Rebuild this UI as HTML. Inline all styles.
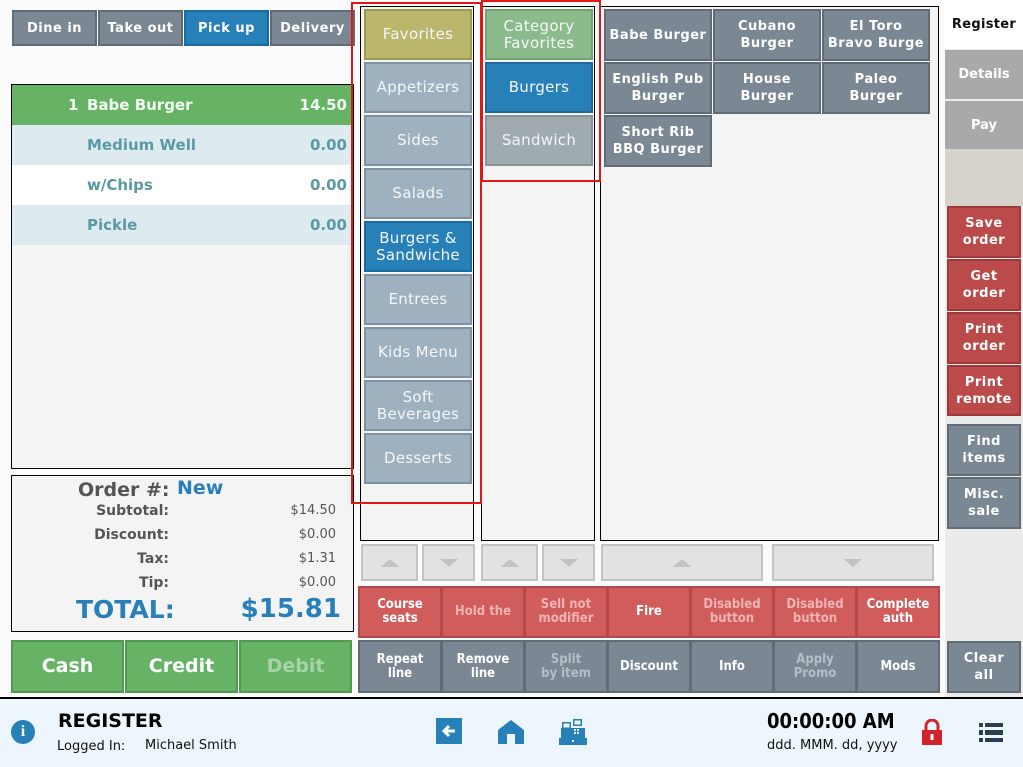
<!DOCTYPE html>
<html><head><meta charset="utf-8"><style>
*{box-sizing:border-box;margin:0;padding:0}
body{width:1023px;height:767px;background:#fbfbfb;position:relative;overflow:hidden;font-family:"DejaVu Sans","Liberation Sans",sans-serif}
.a{position:absolute}
.b{position:absolute;display:flex;align-items:center;justify-content:center;text-align:center;color:#fff;font-weight:bold;line-height:17px}
.g{background:#7b8893;border:2px solid #5f6b75}
.bl{background:#2880b9;border:2px solid #1d6a9c}
.cat{background:#9fb1bf;border:2px solid #7f929f;font-weight:normal;font-size:15px;color:#f4f7f9;letter-spacing:.3px}
.it{font-size:13px;letter-spacing:.5px}
.rd{background:#d05c5c;border:2px solid #b54848;font-family:"DejaVu Sans Condensed","DejaVu Sans",sans-serif;font-size:13px;line-height:14px}
.gy{background:#7b8893;border:2px solid #5f6b75;font-family:"DejaVu Sans Condensed","DejaVu Sans",sans-serif;font-size:13px;line-height:14px}
.dis{color:#f0b4b4}
.dis2{color:#b4bec6}
.rt{font-size:13px;line-height:17px;letter-spacing:.5px}
.rr{background:#bb4a4a;border:2px solid #9c3a3a}
.arr{position:absolute;background:#e2e2e2;border:2px solid #c3c3c3;display:flex;align-items:center;justify-content:center}
.up{width:0;height:0;border-left:9px solid transparent;border-right:9px solid transparent;border-bottom:8px solid #c2c2c2}
.dn{width:0;height:0;border-left:9px solid transparent;border-right:9px solid transparent;border-top:8px solid #c2c2c2}
.row{position:absolute;left:1px;width:340px;height:40px;font-weight:bold;font-size:15px;color:#5a9aa0}
.row span{position:absolute;top:11px}
.lbl{position:absolute;right:184px;font-weight:bold;font-size:14px;color:#555}
.val{position:absolute;right:17px;font-size:13px;color:#555}
.tab{font-size:13px;letter-spacing:.5px}
</style></head><body>

<div class="b g tab" style="left:12px;top:10px;width:85px;height:36px">Dine in</div>
<div class="b g tab" style="left:98px;top:10px;width:85px;height:36px">Take out</div>
<div class="b bl tab" style="left:184px;top:10px;width:85px;height:36px">Pick up</div>
<div class="b g tab" style="left:270px;top:10px;width:85px;height:36px">Delivery</div>

<div class="a" style="left:11px;top:84px;width:343px;height:385px;border:1px solid #000;background:#f4f4f4">
 <div class="row" style="top:0;left:0;width:341px;background:#66b366;color:#f4fff4"><span style="left:56px">1</span><span style="left:75px">Babe Burger</span><span style="right:6px">14.50</span></div>
 <div class="row" style="top:40px;left:0;width:341px;background:#ddebf0"><span style="left:75px">Medium Well</span><span style="right:6px">0.00</span></div>
 <div class="row" style="top:80px;left:0;width:341px;background:#fff"><span style="left:75px">w/Chips</span><span style="right:6px">0.00</span></div>
 <div class="row" style="top:120px;left:0;width:341px;background:#ddebf0"><span style="left:75px">Pickle</span><span style="right:6px">0.00</span></div>
</div>

<div class="a" style="left:11px;top:475px;width:343px;height:157px;border:1px solid #000;background:#f4f4f4">
 <div class="a" style="left:66px;top:3px;font-weight:bold;font-size:19px;color:#555">Order #:</div>
 <div class="a" style="left:165px;top:1px;font-weight:bold;font-size:19px;color:#2880b9">New</div>
 <div class="lbl" style="top:27px">Subtotal:</div><div class="val" style="top:27px">$14.50</div>
 <div class="lbl" style="top:51px">Discount:</div><div class="val" style="top:51px">$0.00</div>
 <div class="lbl" style="top:75px">Tax:</div><div class="val" style="top:75px">$1.31</div>
 <div class="lbl" style="top:99px">Tip:</div><div class="val" style="top:99px">$0.00</div>
 <div class="a" style="left:64px;top:119px;font-weight:bold;font-size:25px;color:#2880b9">TOTAL:</div>
 <div class="a" style="right:12px;top:118px;font-weight:bold;font-size:26px;color:#2880b9">$15.81</div>
</div>

<div class="b" style="left:11px;top:640px;width:113px;height:53px;background:#66b366;border:2px solid #4f9a4f;font-size:19px">Cash</div>
<div class="b" style="left:125px;top:640px;width:113px;height:53px;background:#66b366;border:2px solid #4f9a4f;font-size:19px">Credit</div>
<div class="b" style="left:239px;top:640px;width:113px;height:53px;background:#66b366;border:2px solid #4f9a4f;font-size:19px;color:#a8d3a8">Debit</div>

<div class="a" style="left:360px;top:6px;width:114px;height:535px;border:1px solid #000;background:#f4f4f4"></div>
<div class="b cat" style="left:364px;top:9px;width:108px;height:51px;background:#bab66b;border-color:#9c984f">Favorites</div>
<div class="b cat" style="left:364px;top:62px;width:108px;height:51px">Appetizers</div>
<div class="b cat" style="left:364px;top:115px;width:108px;height:51px">Sides</div>
<div class="b cat" style="left:364px;top:168px;width:108px;height:51px">Salads</div>
<div class="b cat" style="left:364px;top:221px;width:108px;height:51px;background:#2880b9;border-color:#1d6a9c">Burgers &amp;<br>Sandwiche</div>
<div class="b cat" style="left:364px;top:274px;width:108px;height:51px">Entrees</div>
<div class="b cat" style="left:364px;top:327px;width:108px;height:51px">Kids Menu</div>
<div class="b cat" style="left:364px;top:380px;width:108px;height:51px">Soft<br>Beverages</div>
<div class="b cat" style="left:364px;top:433px;width:108px;height:51px">Desserts</div>

<div class="a" style="left:481px;top:6px;width:114px;height:535px;border:1px solid #000;background:#f4f4f4"></div>
<div class="b cat" style="left:485px;top:9px;width:108px;height:51px;background:#8bbb8b;border-color:#73a373">Category<br>Favorites</div>
<div class="b cat" style="left:485px;top:62px;width:108px;height:51px;background:#2880b9;border-color:#1d6a9c">Burgers</div>
<div class="b cat" style="left:485px;top:115px;width:108px;height:51px;background:#a0abb0;border-color:#87949a">Sandwich</div>

<div class="a" style="left:600px;top:6px;width:339px;height:535px;border:1px solid #000;background:#f4f4f4"></div>
<div class="b g it" style="left:604px;top:9px;width:108px;height:52px">Babe Burger</div>
<div class="b g it" style="left:713px;top:9px;width:108px;height:52px">Cubano<br>Burger</div>
<div class="b g it" style="left:822px;top:9px;width:108px;height:52px">El Toro<br>Bravo Burge</div>
<div class="b g it" style="left:604px;top:62px;width:108px;height:52px">English Pub<br>Burger</div>
<div class="b g it" style="left:713px;top:62px;width:108px;height:52px">House<br>Burger</div>
<div class="b g it" style="left:822px;top:62px;width:108px;height:52px">Paleo<br>Burger</div>
<div class="b g it" style="left:604px;top:115px;width:108px;height:52px">Short Rib<br>BBQ Burger</div>

<div class="a" style="left:351px;top:2px;width:131px;height:502px;border:2px solid #e01818"></div>
<div class="a" style="left:481px;top:0px;width:120px;height:182px;border:2px solid #e01818"></div>

<div class="arr" style="left:361px;top:544px;width:57px;height:37px"><div class="up"></div></div>
<div class="arr" style="left:422px;top:544px;width:53px;height:37px"><div class="dn"></div></div>
<div class="arr" style="left:481px;top:544px;width:57px;height:37px"><div class="up"></div></div>
<div class="arr" style="left:542px;top:544px;width:53px;height:37px"><div class="dn"></div></div>
<div class="arr" style="left:601px;top:544px;width:162px;height:37px"><div class="up"></div></div>
<div class="arr" style="left:772px;top:544px;width:162px;height:37px"><div class="dn"></div></div>

<div class="b rd" style="left:358px;top:586px;width:84px;height:52px">Course<br>seats</div>
<div class="b rd dis" style="left:441px;top:586px;width:84px;height:52px">Hold the</div>
<div class="b rd dis" style="left:524px;top:586px;width:84px;height:52px">Sell not<br>modifier</div>
<div class="b rd" style="left:607px;top:586px;width:84px;height:52px">Fire</div>
<div class="b rd dis" style="left:690px;top:586px;width:84px;height:52px">Disabled<br>button</div>
<div class="b rd dis" style="left:773px;top:586px;width:84px;height:52px">Disabled<br>button</div>
<div class="b rd" style="left:856px;top:586px;width:84px;height:52px">Complete<br>auth</div>

<div class="b gy" style="left:358px;top:640px;width:84px;height:53px">Repeat<br>line</div>
<div class="b gy" style="left:441px;top:640px;width:84px;height:53px">Remove<br>line</div>
<div class="b gy dis2" style="left:524px;top:640px;width:84px;height:53px">Split<br>by item</div>
<div class="b gy" style="left:607px;top:640px;width:84px;height:53px">Discount</div>
<div class="b gy" style="left:690px;top:640px;width:84px;height:53px">Info</div>
<div class="b gy dis2" style="left:773px;top:640px;width:84px;height:53px">Apply<br>Promo</div>
<div class="b gy" style="left:856px;top:640px;width:84px;height:53px">Mods</div>

<div class="a" style="left:945px;top:0;width:78px;height:698px;background:#ebebeb"></div>
<div class="b" style="left:945px;top:0;width:78px;height:49px;background:#fff;color:#111;font-size:13px;letter-spacing:.3px">Register</div>
<div class="b" style="left:945px;top:50px;width:78px;height:49px;background:#a9a9a9;font-size:13px">Details</div>
<div class="b" style="left:945px;top:101px;width:78px;height:48px;background:#a9a9a9;font-size:13px">Pay</div>
<div class="a" style="left:945px;top:149px;width:78px;height:57px;background:#d6d2cc"></div>
<div class="b rr rt" style="left:947px;top:206px;width:74px;height:52px">Save<br>order</div>
<div class="b rr rt" style="left:947px;top:259px;width:74px;height:52px">Get<br>order</div>
<div class="b rr rt" style="left:947px;top:312px;width:74px;height:52px">Print<br>order</div>
<div class="b rr rt" style="left:947px;top:365px;width:74px;height:51px">Print<br>remote</div>
<div class="b g rt" style="left:947px;top:424px;width:74px;height:52px">Find<br>items</div>
<div class="b g rt" style="left:947px;top:477px;width:74px;height:52px">Misc.<br>sale</div>
<div class="b g rt" style="left:947px;top:641px;width:74px;height:52px">Clear<br>all</div>

<div class="a" style="left:0;top:697px;width:1023px;height:70px;background:#eef6fd;border-top:2px solid #000"></div>
<div class="a" style="left:11px;top:720px;width:24px;height:24px;border-radius:50%;background:#2880b9;color:#fff;font-weight:bold;font-size:16px;text-align:center;line-height:24px;font-family:'Liberation Serif',serif">i</div>
<div class="a" style="left:58px;top:710px;font-weight:bold;font-size:19px;color:#000">REGISTER</div>
<div class="a" style="left:57px;top:739px;font-size:13px;color:#111">Logged In:</div>
<div class="a" style="left:145px;top:738px;font-size:13px;color:#111">Michael Smith</div>

<svg class="a" style="left:436px;top:718px" width="26" height="27" viewBox="0 0 26 27"><rect width="26" height="26" fill="#2880b9"/><path d="M19 13H8M13 8l-5 5 5 5" stroke="#fff" stroke-width="3" fill="none"/></svg>
<svg class="a" style="left:497px;top:719px" width="28" height="26" viewBox="0 0 28 26"><path d="M14 1L1 11V25H10V15H18V25H27V11Z" fill="#2880b9"/></svg>
<svg class="a" style="left:559px;top:718px" width="28" height="28" viewBox="0 0 28 28"><rect x="14" y="1" width="9" height="7" fill="#2880b9"/><rect x="15.5" y="2.5" width="6" height="4" fill="#eef6fd"/><rect x="3" y="4" width="9" height="11" fill="#2880b9"/><rect x="4.5" y="5.5" width="6" height="4" fill="#eef6fd"/><path d="M2 10H26V20H2Z" fill="#2880b9"/><rect x="14" y="10" width="9" height="8" fill="#2880b9"/><rect x="15" y="11" width="2" height="2" fill="#eef6fd"/><rect x="18" y="11" width="2" height="2" fill="#eef6fd"/><rect x="15" y="14" width="2" height="2" fill="#eef6fd"/><rect x="18" y="14" width="2" height="2" fill="#eef6fd"/><rect x="0" y="20" width="28" height="7" fill="#2880b9"/><rect x="13" y="22" width="2" height="2" fill="#eef6fd"/></svg>

<div class="a" style="left:767px;top:709px;font-weight:bold;font-size:20px;color:#000;font-family:'DejaVu Sans Condensed','DejaVu Sans',sans-serif">00:00:00 AM</div>
<div class="a" style="left:767px;top:738px;font-size:13px;color:#111">ddd. MMM. dd, yyyy</div>
<svg class="a" style="left:922px;top:719px" width="20" height="26" viewBox="0 0 20 26"><path d="M4 11V7a6 6 0 0 1 12 0v4" stroke="#d0242a" stroke-width="3" fill="none"/><rect x="0" y="11" width="20" height="15" fill="#d0242a"/><rect x="8.5" y="15" width="3" height="6" fill="#fff"/></svg>
<svg class="a" style="left:979px;top:723px" width="24" height="20" viewBox="0 0 24 20"><g fill="#2b3d50"><rect x="0" y="0" width="4" height="4"/><rect x="6" y="0" width="18" height="4"/><rect x="0" y="7" width="4" height="5"/><rect x="6" y="7" width="18" height="5"/><rect x="0" y="15" width="4" height="4"/><rect x="6" y="15" width="18" height="4"/></g></svg>

</body></html>
